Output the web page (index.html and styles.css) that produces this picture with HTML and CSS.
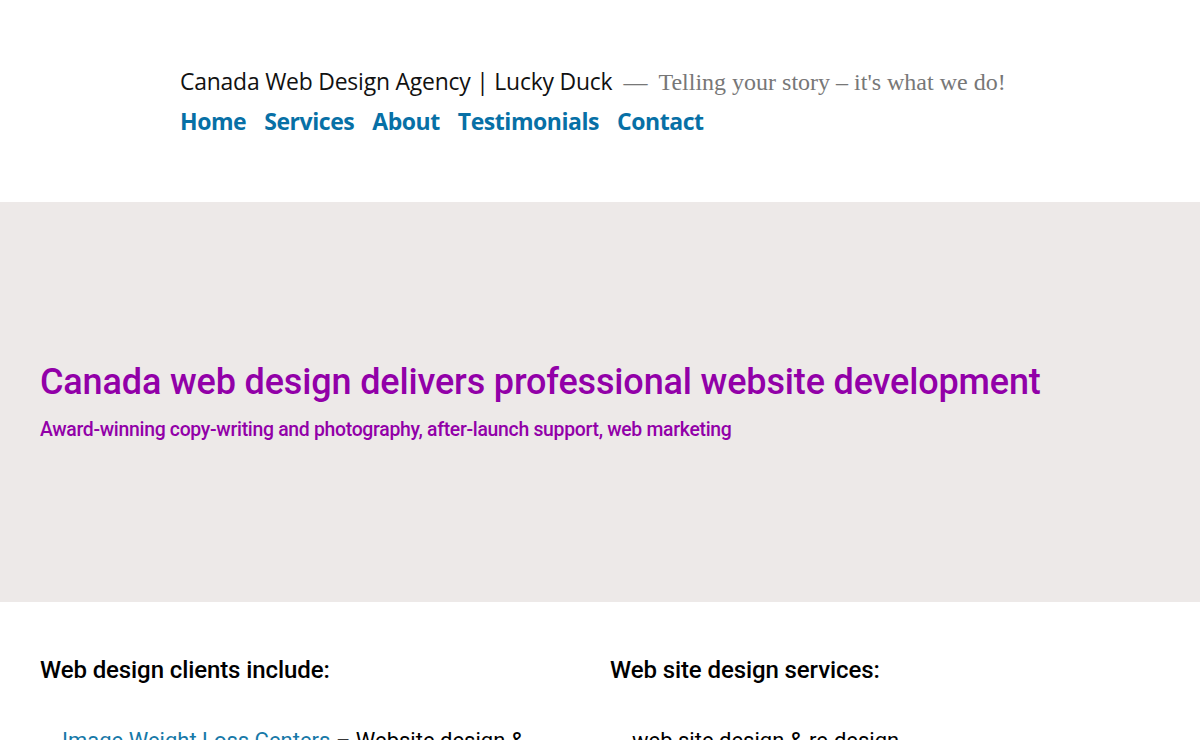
FILE: index.html
```html
<!DOCTYPE html>
<html lang="en">
<head>
<meta charset="utf-8">
<title>Canada Web Design Agency | Lucky Duck</title>
<link rel="stylesheet" href="styles.css">
</head>
<body>
<header class="site-header">
  <div class="branding">
    <span class="site-title">Canada Web Design Agency | Lucky Duck</span>
    <span class="dash">—</span>
    <span class="tagline">Telling your story – it's what we do!</span>
  </div>
  <nav class="main-nav">
    <a href="#">Home</a>
    <a href="#">Services</a>
    <a href="#">About</a>
    <a href="#">Testimonials</a>
    <a href="#">Contact</a>
  </nav>
</header>
<section class="hero">
  <h1>Canada web design delivers professional website development</h1>
  <p class="hero-sub">Award-winning copy-writing and photography, after-launch support, web marketing</p>
</section>
<main class="columns">
  <div class="col">
    <h2>Web design clients include:</h2>
    <ul>
      <li><a href="#">Image Weight Loss Centers</a> – Website design &amp; development</li>
    </ul>
  </div>
  <div class="col">
    <h2>Web site design services:</h2>
    <ul>
      <li>web site design &amp; re-design</li>
    </ul>
  </div>
</main>
</body>
</html>
```
FILE: styles.css
```css
html, body {
  margin: 0;
  padding: 0;
  background: #fff;
}
body {
  font-family: Roboto, "Liberation Sans", sans-serif;
  color: #000;
}
.site-header {
  height: 202px;
  box-sizing: border-box;
  padding: 66px 0 0 180px;
}
.branding {
  display: flex;
  align-items: baseline;
  white-space: nowrap;
}
.site-title {
  font-family: "Open Sans", "Noto Sans", sans-serif;
  font-size: 22.9px;
  color: #111;
  letter-spacing: -0.2px;
}
.dash {
  font-family: "Liberation Serif", serif;
  font-size: 24px;
  color: #777;
  margin: 0 11px 0 11px;
}
.tagline {
  font-family: "Liberation Serif", serif;
  font-size: 24px;
  color: #777;
}
.main-nav {
  display: flex;
  gap: 18px;
  margin-top: 8px;
}
.main-nav a {
  font-family: "Open Sans", "Noto Sans", sans-serif;
  font-weight: 700;
  font-size: 23px;
  color: #0770a6;
  text-decoration: none;
  letter-spacing: -0.45px;
}
.hero {
  background: #ede9e8;
  height: 400px;
  box-sizing: border-box;
  padding: 158px 40px 0;
}
.hero h1 {
  margin: 0;
  font-size: 36px;
  font-weight: 500;
  color: #9200a8;
  line-height: 44px;
  letter-spacing: -0.15px;
}
.hero-sub {
  margin: 14px 0 0;
  font-size: 19.4px;
  font-weight: 500;
  color: #9200a8;
  letter-spacing: -0.3px;
}
.columns {
  display: grid;
  grid-template-columns: 1fr 1fr;
  gap: 20px;
  padding: 53px 40px 0;
}
.col h2 {
  margin: 0;
  font-size: 24px;
  font-weight: 500;
  line-height: 30px;
  letter-spacing: -0.1px;
}
.col ul {
  list-style: none;
  margin: 41px 0 0;
  padding: 0 0 0 22px;
}
.col li {
  font-size: 22px;
  line-height: 30px;
}
.col li a {
  color: #1779a8;
  text-decoration: none;
}
```
